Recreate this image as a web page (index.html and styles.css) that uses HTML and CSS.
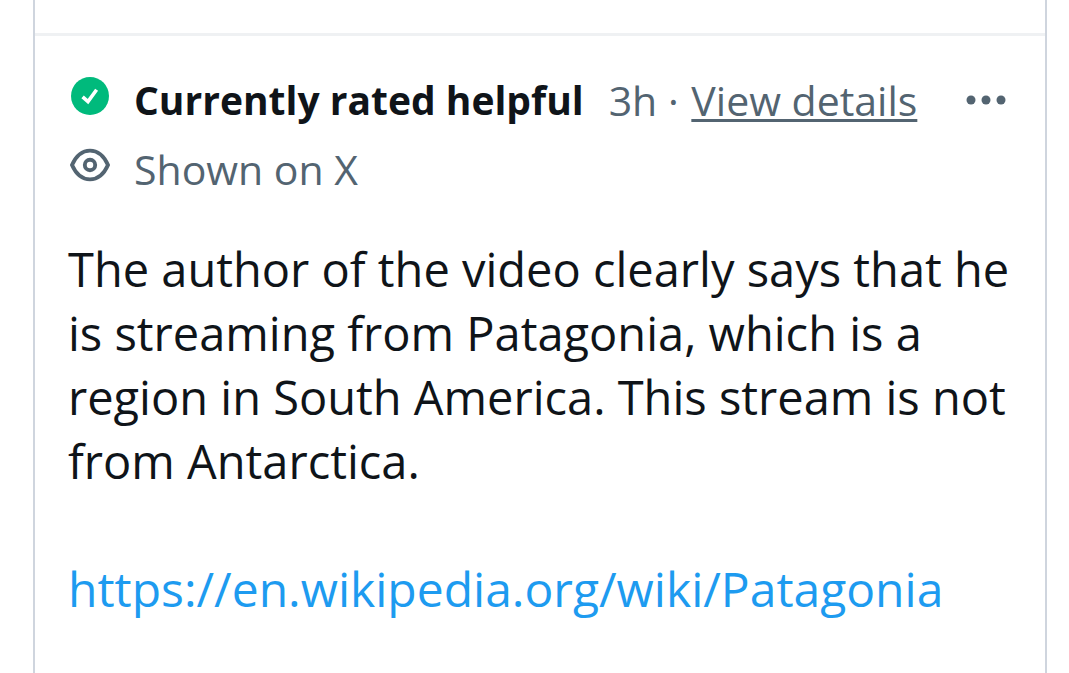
FILE: index.html
```
<!DOCTYPE html>
<html lang="en">
  <head>
    <meta charset="UTF-8" />
    <meta name="viewport" content="width=device-width, initial-scale=1.0" />
    <title>Community note</title>
    <link rel="stylesheet" href="styles.css">
  </head>
  <body>
    <main class="column">
      <div class="topBar"></div>
      <article class="note">
        <div class="status">
          <svg class="icon" viewBox="0 0 40 40" aria-hidden="true">
            <circle cx="20" cy="20" r="19" fill="#00ba7c" />
            <path d="M12.6 20.8 L18 25.6 L26.6 13.8" fill="none" stroke="#fff" stroke-width="3.6" />
          </svg>
          <h1>Currently rated helpful</h1>
          <p class="meta">3h · <a href="#">View details</a></p>
          <button class="more" aria-label="More">
            <svg viewBox="0 0 40 40" aria-hidden="true">
              <circle cx="5" cy="20" r="4.5" />
              <circle cx="20" cy="20" r="4.5" />
              <circle cx="35" cy="20" r="4.5" />
            </svg>
          </button>
        </div>
        <div class="shown">
          <svg class="icon" viewBox="0 0 40 40" aria-hidden="true">
            <path d="M2 20 C6 11 12 5.6 20 5.6 S34 11 38 20 C34 29 28 34.4 20 34.4 S6 29 2 20 Z" />
            <circle cx="20" cy="20" r="5.2" />
          </svg>
          <p>Shown on X</p>
        </div>
        <div class="noteText">
          <p>The author of the video clearly says that he is streaming from Patagonia, which is a region in South America. This stream is not from Antarctica.</p>
          <a href="https://en.wikipedia.org/wiki/Patagonia">https://en.wikipedia.org/wiki/Patagonia</a>
        </div>
      </article>
    </main>
  </body>
</html>
```
FILE: styles.css
```
* {
  box-sizing: border-box;
}
body {
  margin: 0;
  background: #fff;
  color: #0f1419;
  font-family: "Open Sans", "Noto Sans", sans-serif;
}
h1,
p {
  margin: 0;
}
.column {
  min-height: 100vh;
  margin: 0 22px 0 33px;
  border-left: 2px solid #cfd5de;
  border-right: 2px solid #cfd5de;
}
.topBar {
  height: 36px;
  border-bottom: 3px solid #eff1f3;
}
.note {
  padding: 29px 34px 29px 33px;
}
.status,
.shown {
  display: flex;
  align-items: center;
  height: 69px;
  color: #536471;
  font-size: 41px;
  white-space: nowrap;
}
.icon {
  flex: none;
  width: 40px;
  height: 40px;
  margin: 0 24px 8px 2px;
}
h1 {
  color: #0f1419;
  font-size: 39px;
  font-weight: 700;
}
.meta {
  margin-left: 25px;
}
.meta a {
  margin-left: 2px;
  color: #536471;
  text-decoration-thickness: 3px;
  text-underline-offset: 3px;
  text-decoration-skip-ink: none;
}
.more {
  width: 40px;
  height: 40px;
  margin: 0 5px 0 auto;
  padding: 0;
  border: 0;
  background: none;
}
.more svg {
  display: block;
  fill: #536471;
}
.shown .icon {
  fill: none;
  stroke: #536471;
  stroke-width: 3.9;
}
.noteText {
  margin-top: 34px;
  font-size: 47px;
  line-height: 64px;
}
.noteText p {
  margin-bottom: 64px;
}
.noteText a {
  color: #1d9bf0;
  font-size: 48px;
  text-decoration: none;
}
```
